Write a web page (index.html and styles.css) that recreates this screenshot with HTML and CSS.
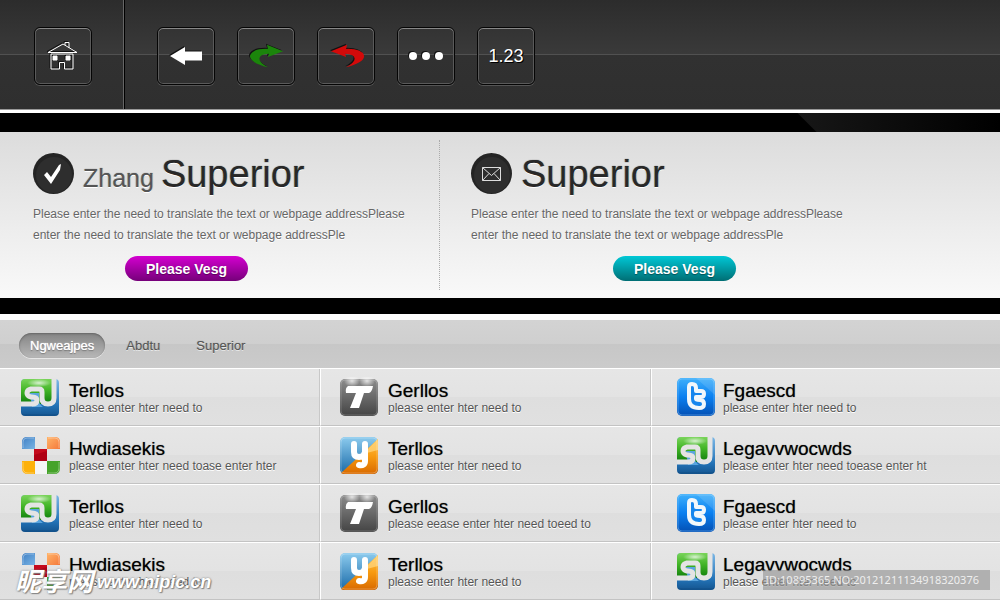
FILE: index.html
```
<!DOCTYPE html>
<html lang="en">
<head>
	<meta charset="UTF-8">
	<title>Superior</title>
	<link rel="stylesheet" href="styles.css">
</head>
<body>
	<!-- icons -->
	<svg class="defs" aria-hidden="true">
		<defs>
			<linearGradient id="gGreen" x1="0" y1="0" x2="0" y2="1"><stop offset="0" stop-color="#7ad45a"/><stop offset=".45" stop-color="#42b527"/><stop offset="1" stop-color="#0f7d0c"/></linearGradient>
			<linearGradient id="gBlue" x1="0" y1="0" x2="0" y2="1"><stop offset="0" stop-color="#7db8e6"/><stop offset=".7" stop-color="#2474b8"/><stop offset="1" stop-color="#145590"/></linearGradient>
			<linearGradient id="gGrey" x1="0" y1="0" x2="0" y2="1"><stop offset="0" stop-color="#8c8c8c"/><stop offset="1" stop-color="#444"/></linearGradient>
			<linearGradient id="gSky" x1="0" y1="0" x2="0" y2="1"><stop offset="0" stop-color="#8ccbee"/><stop offset="1" stop-color="#1a6aa8"/></linearGradient>
			<linearGradient id="gOrange" x1="0" y1="0" x2="0" y2="1"><stop offset="0" stop-color="#ffc24a"/><stop offset=".5" stop-color="#f79a10"/><stop offset="1" stop-color="#d96a00"/></linearGradient>
			<linearGradient id="gBird" x1="0" y1="0" x2="0" y2="1"><stop offset="0" stop-color="#3fb0fb"/><stop offset=".5" stop-color="#0a7ff0"/><stop offset="1" stop-color="#0450b4"/></linearGradient>
			<linearGradient id="gPale" x1="0" y1="0" x2="1" y2="1"><stop offset="0" stop-color="#3f7fc4"/><stop offset="1" stop-color="#79b4e4"/></linearGradient>
			<linearGradient id="gPeach" x1="0" y1="0" x2="1" y2="1"><stop offset="0" stop-color="#ffb469"/><stop offset="1" stop-color="#f5793a"/></linearGradient>
			<radialGradient id="gShine"><stop offset="0" stop-color="#fff" stop-opacity=".75"/><stop offset="1" stop-color="#fff" stop-opacity="0"/></radialGradient>
		</defs>
		<symbol id="su" viewBox="0 0 40 40">
			<rect x="1" y="2" width="38" height="37" rx="4" fill="url(#gBlue)"/>
			<path d="M1 27V6q0-4 4-4H34V23q0 4-4 4z" fill="url(#gGreen)"/>
			<path d="M10 16h9v8q0 3 4 6H12z" fill="#5aa5de"/>
			<ellipse cx="19" cy="6" rx="12" ry="4" fill="url(#gShine)"/>
			<path d="M1 27H12Q17 27 17 23.500T12 20H11Q7 19 7 16T11 12H19Q22 12 22 15V21Q22 27 28 27T34 21V1" fill="none" stroke="#e4e4e4" stroke-width="5"/>
			<path d="M2 37q1 1 3 1h30q2 0 3-1" fill="none" stroke="#0d4579" stroke-opacity=".5"/>
		</symbol>
		<symbol id="blocks" viewBox="0 0 40 40">
			<path d="M2 14V7q0-5 5-5h8v12z" fill="url(#gPale)"/>
			<path d="M27 2h8q5 0 5 5v7H27z" fill="url(#gPeach)"/>
			<path d="M14 14h13v12H14z" fill="#c40a1c"/>
			<path d="M14 20l13-4v10H14z" fill="#b00014"/>
			<path d="M2 26h13v13H8q-6 0-6-6z" fill="#fdb10a"/>
			<path d="M15 26h12v13H15z" fill="#f5f5f5"/>
			<path d="M27 26h13v7q0 6-6 6h-7z" fill="#46a32a"/>
			<path d="M3 13V7q0-4 4-4h7M28 3h7q4 0 4 4v6M3 27v6q0 5 5 5h6M39 27v6q0 5-5 5h-6" fill="none" stroke="#fff" stroke-opacity=".35"/>
		</symbol>
		<symbol id="tee" viewBox="0 0 40 40">
			<rect x="1" y="2" width="38" height="37" rx="5" fill="url(#gGrey)"/>
			<rect x="2" y="3" width="36" height="35" rx="4" fill="none" stroke="#fff" stroke-opacity=".2"/>
			<ellipse cx="13" cy="4" rx="8" ry="6" fill="url(#gShine)"/>
			<ellipse cx="28" cy="4" rx="8" ry="6" fill="url(#gShine)"/>
			<path d="M9 9H34Q33 15 30 16H25L20 31H11L17 16H7Q6 11 9 9z" fill="#fff"/>
		</symbol>
		<symbol id="why" viewBox="0 0 40 40">
			<rect x="1" y="2" width="38" height="37" rx="5" fill="url(#gSky)"/>
			<path d="M39 4V34q0 5-5 5H5q-2 0-3-1z" fill="url(#gOrange)"/>
			<path d="M39 4V15L24 19z" fill="#ffd277" fill-opacity=".8"/>
			<rect x="2" y="3" width="36" height="35" rx="4" fill="none" stroke="#fff" stroke-opacity=".25"/>
			<path d="M15 9V17Q15 22 20 22T26 17V9M26 15V26Q26 31 20 30" fill="none" stroke="#fff" stroke-width="6" stroke-linecap="round" stroke-linejoin="round"/>
		</symbol>
		<symbol id="bird" viewBox="0 0 40 40">
			<rect x="1" y="1" width="38" height="38" rx="5" fill="url(#gBird)"/>
			<rect x="2" y="2" width="36" height="36" rx="4" fill="none" stroke="#9bd8ff" stroke-opacity=".4"/>
			<path d="M20 1H34q5 0 5 5v12z" fill="#fff" fill-opacity=".12"/>
			<path d="M13 10Q13 7 16 7Q20 7 20 11V14H25Q28 14 28 17Q28 20 25 20H20V22Q20 23 24 23Q28 23 28 27Q28 31 23 31Q13 31 13 22z" fill="#1686ee" stroke="#f2f7fb" stroke-width="4" stroke-linejoin="round"/>
		</symbol>
		<symbol id="swoop" viewBox="0 0 38 28">
			<path d="M21 26Q2 21 2 14Q4 6 21 6.500L20 2L37 9L21 15L22 11.500Q12 12 12 17Q12 21 21 26z"/>
		</symbol>
	</svg>

	<header class="toolbar">
		<div class="home">
			<button class="tool" aria-label="Home">
				<svg width="32" height="32" viewBox="0 0 32 32" fill="none" stroke="#fff"><path d="M1 12.500L16 4L30 12.500z"/><path d="M18 5V2.500H22V8"/><path d="M4 14H26V29H17.500V22.500H12.500V29H4z"/><path d="M6 16h4v4H6zM19 16h4v4h-4z" fill="#fff"/></svg>
			</button>
		</div>
		<nav class="tools">
			<button class="tool" aria-label="Back">
				<svg width="34" height="20" viewBox="0 0 34 20"><path d="M1 10L16 1V5.500H33V14.500H16V19z" fill="#fff"/></svg>
			</button>
			<button class="tool redo" aria-label="Redo">
				<svg width="36" height="28"><use href="#swoop"/></svg>
			</button>
			<button class="tool undo" aria-label="Undo">
				<svg width="36" height="28"><use href="#swoop" transform="matrix(-1 0 0 1 38 0)"/></svg>
			</button>
			<button class="tool" aria-label="More">
				<svg width="36" height="10" viewBox="0 0 36 10" fill="#fff"><circle cx="5" cy="5" r="4"/><circle cx="18" cy="5" r="4"/><circle cx="31" cy="5" r="4"/></svg>
			</button>
			<button class="tool">1.23</button>
		</nav>
	</header>
	<div class="strip glow"></div>

	<main>
		<div class="promos">
			<section class="promo">
				<h2>
					<svg class="badge" viewBox="0 0 41 41"><circle cx="20.500" cy="20.500" r="20.500" fill="#242424"/><circle cx="21" cy="22" r="18" fill="#2e2e2e"/><path d="M11 22L14 19L18 24L26 12L28 11L27 17L18 31z" fill="#fff"/></svg>
					<small>Zhang</small> Superior
				</h2>
				<p>Please enter the need to translate the text or webpage addressPlease enter the need to translate the text or webpage addressPle</p>
				<button class="pill purple">Please Vesg</button>
			</section>
			<section class="promo">
				<h2>
					<svg class="badge" viewBox="0 0 41 41"><circle cx="20.500" cy="20.500" r="20.500" fill="#242424"/><circle cx="21" cy="22" r="18" fill="#2e2e2e"/><path d="M11.500 14.500H29.500V27.500H11.500zM11.500 14.500L20.500 22.500L29.500 14.500M11.500 27.500L18 20.500M29.500 27.500L23 20.500" fill="none" stroke="#ddd"/></svg>
					Superior
				</h2>
				<p>Please enter the need to translate the text or webpage addressPlease enter the need to translate the text or webpage addressPle</p>
				<button class="pill teal">Please Vesg</button>
			</section>
		</div>
		<div class="strip low"></div>

		<nav class="tabs">
			<a class="active" href="#">Ngweajpes</a>
			<a href="#">Abdtu</a>
			<a href="#">Superior</a>
		</nav>

		<ul class="list">
			<li><svg class="icon"><use href="#su"/></svg><div><h3>Terllos</h3><p>please enter hter need to</p></div></li>
			<li><svg class="icon"><use href="#tee"/></svg><div><h3>Gerllos</h3><p>please enter hter need to</p></div></li>
			<li><svg class="icon"><use href="#bird"/></svg><div><h3>Fgaescd</h3><p>please enter hter need to</p></div></li>

			<li><svg class="icon"><use href="#blocks"/></svg><div><h3>Hwdiasekis</h3><p>please enter hter need toase enter hter</p></div></li>
			<li><svg class="icon"><use href="#why"/></svg><div><h3>Terllos</h3><p>please enter hter need to</p></div></li>
			<li><svg class="icon"><use href="#su"/></svg><div><h3>Legavvwocwds</h3><p>please enter hter need toease enter ht</p></div></li>

			<li><svg class="icon"><use href="#su"/></svg><div><h3>Terllos</h3><p>please enter hter need to</p></div></li>
			<li><svg class="icon"><use href="#tee"/></svg><div><h3>Gerllos</h3><p>please eease enter hter need toeed to</p></div></li>
			<li><svg class="icon"><use href="#bird"/></svg><div><h3>Fgaescd</h3><p>please enter hter need to</p></div></li>

			<li><svg class="icon"><use href="#blocks"/></svg><div><h3>Hwdiasekis</h3><p>please enter hter need to</p></div></li>
			<li><svg class="icon"><use href="#why"/></svg><div><h3>Terllos</h3><p>please enter hter need to</p></div></li>
			<li><svg class="icon"><use href="#su"/></svg><div><h3>Legavvwocwds</h3><p>please enter hter need to</p></div></li>
		</ul>
		<div class="mark"><b>昵享网</b><i>www.nipic.cn</i></div>
		<div class="serial">ID:10895365 NO:20121211134918320376</div>
	</main>
</body>
</html>
```
FILE: styles.css
```
*{box-sizing:border-box;}
body{margin:0;background:#fff;font-family:"Liberation Sans",Arial,sans-serif;font-size:12px;color:#555;}
h2,h3,p,ul{margin:0;padding:0;font-weight:normal;}
button{font-family:inherit;padding:0;cursor:pointer;}
main{position:relative;}
.defs{display:block;width:0;height:0;}

/* toolbar */
.toolbar{display:flex;height:110px;border-bottom:1px solid #999;background:linear-gradient(#2c2c2c,#3a3a3a 54px,#515151 54px,#515151 55px,#313131 55px,#2f2f2f);}
.home{padding:27px 32px 0 34px;border-right:1px solid #000;box-shadow:inset -1px 0 #666;}
.tools{display:flex;gap:22px;padding:27px 32px 0;}
.tool{display:flex;align-items:center;justify-content:center;width:58px;height:58px;border:1px solid #050505;border-radius:6px;background:transparent;box-shadow:inset 0 1px #888,inset 0 0 0 1px #5a5a5a,0 1px #555;color:#fff;font-size:18px;text-shadow:1px 1px #000;}
.tool svg{filter:drop-shadow(-1px -1px #111);}
.redo{fill:#1b850b;}
.undo{fill:#d20a0a;}

.strip{height:19px;background:#000;}
.glow{margin-top:3px;background:linear-gradient(45deg,#000 14px,transparent 15px) right/204px 19px no-repeat,linear-gradient(90deg,#000 calc(100% - 204px),#171717 calc(100% - 203px),#000);}
.low{height:16px;}

/* promos */
.promos{display:grid;grid-template-columns:440fr 560fr;height:166px;background:linear-gradient(#dcdcdc,#f9f9f9);}
.promo{padding:21px 20px 0 33px;}
.promo + .promo{position:relative;padding-left:31px;}
.promo + .promo::before{content:"";position:absolute;left:-1px;top:8px;bottom:8px;border-left:1px dotted #aaa;}
.promo h2{display:flex;align-items:baseline;gap:7px;height:43px;line-height:43px;font-size:38px;color:#282828;text-shadow:0 1px #fff,0 0 1px #282828;}
.promo small{font-size:25px;color:#555;text-shadow:0 1px #fff,0 0 1px #555;}
.badge{flex:none;width:41px;height:41px;margin-right:2px;align-self:flex-start;}
.promo p{max-width:386px;margin-top:8px;line-height:21px;text-shadow:0 1px #fff;color:#666;}
.pill{width:123px;height:25px;margin:10px 0 0 92px;border:0;border-radius:13px;color:#fff;font-size:14px;font-weight:bold;text-shadow:0 1px 1px rgba(0,0,0,.4);}
.purple{background:linear-gradient(#d400d0,#76007a);}
.teal{margin-left:142px;background:linear-gradient(#00c8d6,#006e74);}

/* tabs */
.tabs{display:flex;align-items:center;height:48px;margin-top:6px;padding:2px 19px 0;background:linear-gradient(#d3d3d3,#cfcfcf 50%,#c7c7c7 50%,#cbcbcb);}
.tabs a{padding:0 11px;line-height:25px;border-radius:13px;color:#555;font-size:13px;text-decoration:none;text-shadow:0 1px #e8e8e8,0 0 1px #777;}
.tabs a + a{margin-left:14px;}
.tabs .active + a{margin-left:10px;}
.tabs .active{background:linear-gradient(#848484,#b8b8b8);box-shadow:inset 0 1px 2px #666,0 1px #e6e6e6;color:#fff;text-shadow:0 0 1px #fff,0 1px 1px #666;}

/* list */
.list{display:grid;grid-template-columns:320fr 331fr 349fr;list-style:none;}
.list li{display:flex;align-items:center;gap:9px;height:58px;padding-left:18px;border-top:1px solid #fff;border-bottom:1px solid #c3c3c3;border-left:1px solid #fff;background:linear-gradient(#e6e6e6,#e3e3e3 50%,#dedede 50%,#e0e0e0);box-shadow:inset -1px 0 #c8c8c8;}
.list li:nth-child(3n+1){padding-left:20px;border-left:0;}
.list li:nth-child(3n){padding-left:24px;gap:7px;box-shadow:none;}
.icon{flex:none;width:40px;height:40px;}
.list h3{padding-top:2px;line-height:20px;font-size:19px;color:#000;text-shadow:0 0 1px rgba(0,0,0,.6);}
.list p{line-height:14px;text-shadow:0 1px #fff;}

.mark{position:absolute;left:15px;bottom:4px;display:flex;align-items:center;gap:4px;color:#fff;font-family:"Liberation Sans","Noto Sans CJK SC",sans-serif;line-height:28px;text-shadow:0 0 2px #777,1px 1px 1px #888;}
.mark b{font-size:26px;font-style:italic;}
.mark i{font-size:18px;font-weight:bold;}
.serial{position:absolute;right:10px;bottom:10px;padding:0 11px 0 2px;background:rgba(150,150,150,.65);color:#eee;font-family:"Noto Sans",sans-serif;font-size:11px;line-height:20px;}
```
